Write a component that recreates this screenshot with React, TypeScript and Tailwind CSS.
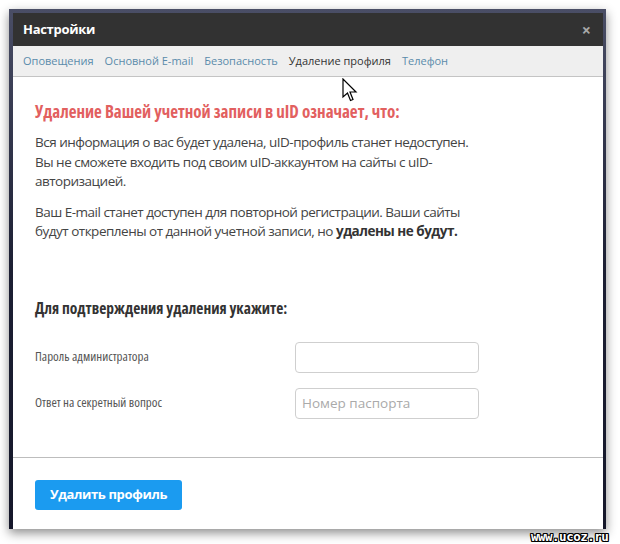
import React from "react";

const tabs = [
  { label: "Оповещения", active: false },
  { label: "Основной E-mail", active: false },
  { label: "Безопасность", active: false },
  { label: "Удаление профиля", active: true },
  { label: "Телефон", active: false },
];

export default function App() {
  return (
    <div
      className="relative w-[620px] h-[544px] bg-white overflow-hidden"
      style={{ fontFamily: '"Open Sans", "Noto Sans", sans-serif' }}
    >
      <div className="absolute left-[9px] top-[9px] w-[597px] h-[520px] bg-gradient-to-b from-[#4a4e66] via-[#1c1f33] to-[#15172a] pt-[4px] pl-[4px] pr-[3px] shadow-[0_4px_10px_rgba(0,0,0,0.45)]">
        <div className="flex flex-col h-full bg-white">
          <div className="h-[33px] bg-[#323232] flex items-center justify-between pl-[10px] pr-[12px]">
            <span className="text-white font-bold text-[13px] tracking-[-0.3px]">Настройки</span>
            <span className="text-[#a8a8a8] font-bold text-[16px] leading-none">×</span>
          </div>
          <div className="h-[31px] bg-[#efefef] border-b border-[#c4c4c4] flex items-center gap-[11px] px-[10px] text-[11px]">
            {tabs.map((t) => (
              <span key={t.label} className={t.active ? "text-[#333]" : "text-[#5a8bab]"}>
                {t.label}
              </span>
            ))}
          </div>
          <div className="flex-1 flex flex-col px-[22px] pt-[23px]">
            <h2 className="text-[17px] leading-[24px] font-bold text-[#e2605f] font-stretch-[79%]">
              Удаление Вашей учетной записи в uID означает, что:
            </h2>
            <p className="mt-[9px] max-w-[445px] text-[13.5px] leading-[19.5px] tracking-[-0.5px] text-[#444]">
              Вся информация о вас будет удалена, uID-профиль станет недоступен. Вы не сможете входить под своим uID-аккаунтом на сайты с uID-авторизацией.
            </p>
            <p className="mt-[11px] max-w-[445px] text-[13.5px] leading-[19.5px] tracking-[-0.5px] text-[#444]">
              Ваш E-mail станет доступен для повторной регистрации. Ваши сайты будут откреплены от данной учетной записи, но <b className="text-[#333]">удалены не будут.</b>
            </p>
            <h3 className="mt-[55px] text-[15.5px] leading-[22px] font-bold text-[#333] font-stretch-[79%]">
              Для подтверждения удаления укажите:
            </h3>
            <div className="mt-[23px] flex items-center">
              <span className="w-[260px] text-[13px] text-[#555] font-stretch-[79%]">Пароль администратора</span>
              <div className="w-[184px] h-[31px] border border-[#cfcfcf] rounded-[4px] bg-white" />
            </div>
            <div className="mt-[15px] flex items-center">
              <span className="w-[260px] text-[13px] text-[#555] font-stretch-[79%]">Ответ на секретный вопрос</span>
              <div className="w-[184px] h-[31px] border border-[#cfcfcf] rounded-[4px] bg-white flex items-center px-[6px] text-[13.5px] text-[#aaa]">
                Номер паспорта
              </div>
            </div>
          </div>
          <div className="h-[72px] border-t border-[#bdbdbd] px-[22px] pt-[22px]">
            <button className="w-[147px] h-[30px] rounded-[3px] bg-[#1b9bf0] text-white font-bold text-[13px] tracking-[-0.35px]">
              Удалить профиль
            </button>
          </div>
        </div>
      </div>
      <svg className="absolute left-[342px] top-[78px]" width="16" height="26" viewBox="0 0 16 26">
        <path d="M1 1 L1 19 L5.5 15 L8.5 22.5 L11 21.5 L8 14 L14 14 Z" fill="white" stroke="black" strokeWidth="1.2" strokeLinejoin="miter" />
      </svg>
      <div
        className="absolute left-[531px] top-[530px] text-[12.5px] leading-[14px] font-bold text-white tracking-[-0.5px]"
        style={{
          fontFamily: '"DejaVu Sans Mono", monospace',
          textShadow:
            "1px 0 0 #000, -1px 0 0 #000, 0 1px 0 #000, 0 -1px 0 #000, 1px 1px 0 #000, -1px -1px 0 #000, 1px -1px 0 #000, -1px 1px 0 #000",
        }}
      >
        www.ucoz.ru
      </div>
    </div>
  );
}
